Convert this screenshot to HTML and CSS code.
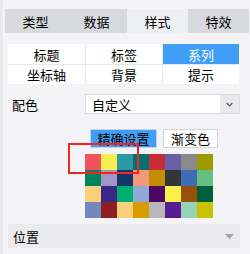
FILE: index.html
```html
<!DOCTYPE html>
<html>
<head>
<meta charset="utf-8">
<link rel="stylesheet" href="styles.css">
</head>
<body>
<div class="panel">
  <div class="tabs">
    <div class="tab">类型</div>
    <div class="tab">数据</div>
    <div class="tab active">样式</div>
    <div class="tab">特效</div>
  </div>
  <div class="sub">
    <div class="cell">标题</div>
    <div class="cell">标签</div>
    <div class="cell on">系列</div>
    <div class="cell">坐标轴</div>
    <div class="cell">背景</div>
    <div class="cell">提示</div>
  </div>
  <div class="field">
    <div class="label">配色</div>
    <div class="select">
      <div class="value">自定义</div>
      <div class="caret">
        <svg width="20" height="18" viewBox="0 0 20 18"><path d="M7 8 L10 11 L13 8" fill="none" stroke="#555" stroke-width="1.3"/></svg>
      </div>
    </div>
  </div>
  <div class="btns">
    <div class="btn primary">精确设置</div>
    <div class="btn">渐变色</div>
  </div>
  <div class="palette-wrap">
    <div class="palette">
      <i style="background:#f2525c"></i><i style="background:#f6f052"></i><i style="background:#2a99a3"></i><i style="background:#03706e"></i><i style="background:#c82d35"></i><i style="background:#6760a6"></i><i style="background:#8a8a8a"></i><i style="background:#9f9900"></i>
      <i style="background:#02835c"></i><i style="background:#a196c6"></i><i style="background:#10366a"></i><i style="background:#f2977a"></i><i style="background:#c38e05"></i><i style="background:#353535"></i><i style="background:#3f6db5"></i><i style="background:#65bf81"></i>
      <i style="background:#f9cf7b"></i><i style="background:#3a2886"></i><i style="background:#00ae72"></i><i style="background:#90aad7"></i><i style="background:#4b0762"></i><i style="background:#f9f14a"></i><i style="background:#955207"></i><i style="background:#005f3d"></i>
      <i style="background:#7289c0"></i><i style="background:#8f1e23"></i><i style="background:#f8cf7c"></i><i style="background:#d89b00"></i><i style="background:#b7b7b7"></i><i style="background:#561d93"></i><i style="background:#98d1b9"></i><i style="background:#c8c200"></i>
    </div>
    <div class="mark"></div>
  </div>
  <div class="section">
    <span>位置</span>
    <svg class="tri" width="9" height="5" viewBox="0 0 9 5"><path d="M0 0 H9 L4.5 5 Z" fill="#a3a3a3"/></svg>
  </div>
</div>
</body>
</html>
```
FILE: styles.css
```css
html, body {
  margin: 0;
  padding: 0;
}
body {
  width: 250px;
  height: 254px;
  background: #f4f4f6;
  font-family: "Noto Sans CJK SC", "Noto Sans", sans-serif;
  font-size: 13px;
  color: #000;
  overflow: hidden;
}
.panel {
  border-left: 3px solid #e9e9eb;
  height: 254px;
  box-sizing: border-box;
  padding-top: 9px;
}
.tabs {
  margin-left: 2px;
  width: 244px;
  height: 24px;
  display: grid;
  grid-template-columns: repeat(4, 1fr);
}
.tab {
  background: #d8d9dc;
  display: flex;
  align-items: center;
  justify-content: center;
  font-size: 13px;
}
.tab.active {
  background: #eeeff2;
}
.sub {
  margin: 11px 0 0 5px;
  width: 231px;
  height: 40px;
  display: grid;
  grid-template-columns: 77px 76px 76px;
  grid-template-rows: 20px 19px;
  gap: 1px;
  background: #e8e8ea;
}
.cell {
  background: #fff;
  display: flex;
  align-items: center;
  justify-content: center;
  font-size: 13px;
  line-height: 1;
}
.cell.on {
  background: #409ef7;
  color: #fff;
}
.field {
  margin-top: 10px;
  height: 20px;
  display: flex;
  align-items: center;
}
.label {
  width: 82px;
  padding-left: 9px;
  box-sizing: border-box;
  font-size: 13px;
}
.select {
  width: 155px;
  height: 20px;
  box-sizing: border-box;
  border: 1px solid #dcdcdc;
  background: #fff;
  display: flex;
}
.value {
  flex: 1;
  padding-left: 6px;
  display: flex;
  align-items: center;
  font-size: 13px;
}
.caret {
  width: 19px;
  background: #e9e9eb;
  display: flex;
  align-items: center;
  justify-content: center;
}
.btns {
  margin: 15px 0 0 87px;
  height: 19px;
  display: flex;
  gap: 6px;
}
.btn {
  width: 55px;
  height: 19px;
  box-sizing: border-box;
  border: 1px solid #d4d4d6;
  background: #fff;
  display: flex;
  align-items: center;
  justify-content: center;
  font-size: 13px;
}
.btn.primary {
  width: 67px;
  background: #409ef7;
  border-color: #c6d3e0;
  color: #000;
}
.palette-wrap {
  position: relative;
  margin: 6px 0 0 82px;
  width: 128px;
  height: 64px;
}
.palette {
  display: grid;
  grid-template-columns: repeat(8, 16px);
  grid-template-rows: repeat(4, 16px);
}
.palette i {
  display: block;
}
.mark {
  position: absolute;
  left: -17px;
  top: -11px;
  width: 71px;
  height: 31px;
  border: 2px solid #f42424;
  box-sizing: border-box;
}
.section {
  margin: 6px 0 0 5px;
  width: 232px;
  height: 24px;
  background: #ebebed;
  display: flex;
  align-items: center;
  justify-content: space-between;
  padding: 0 6px 0 5px;
  box-sizing: border-box;
  font-size: 13px;
}
.tri {
  margin-top: 1px;
}
```
